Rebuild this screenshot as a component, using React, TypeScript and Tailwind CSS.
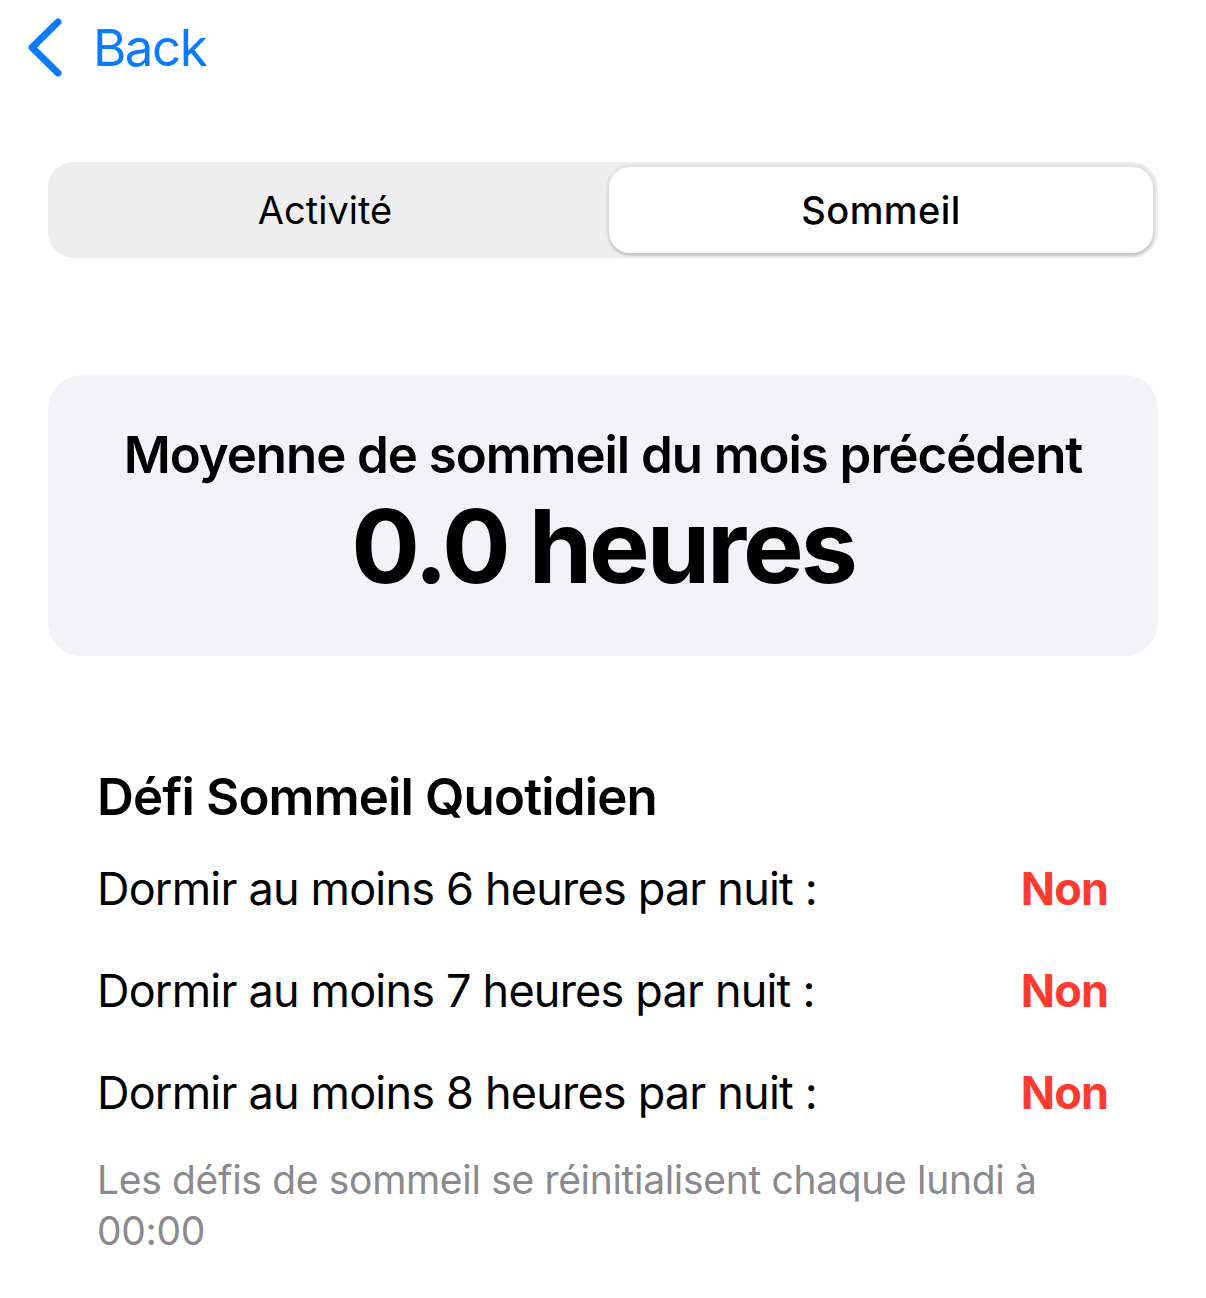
import React from "react";

export default function App() {
  const rows = ["6", "7", "8"];
  return (
    <div className="w-[1206px] min-h-[1298px] bg-white text-black font-['Inter','Liberation_Sans',sans-serif] antialiased">
      {/* Nav bar */}
      <div className="h-[95px] flex items-center pl-[24px]">
        <svg width="44" height="60" viewBox="0 0 44 60" className="shrink-0">
          <path
            d="M34 4 L8 29.5 L34 55"
            fill="none"
            stroke="#0a7aff"
            strokeWidth="7"
            strokeLinecap="round"
            strokeLinejoin="round"
          />
        </svg>
        <span className="ml-[25px] text-[51px] leading-[60px] text-[#0a7aff] tracking-[-1.5px]">Back</span>
      </div>

      {/* Segmented control */}
      <div className="mt-[67px] mx-[48px] h-[96px] rounded-[26px] bg-[#eeeeef] p-[5px] flex gap-[12px]">
        <div className="flex-1 flex items-center justify-center text-[38px] text-black tracking-[0px]">
          Activité
        </div>
        <div className="flex-1 flex items-center justify-center rounded-[21px] bg-white text-[38px] font-medium text-black shadow-[0_3px_3px_rgba(0,0,0,0.12),0_0_0_3px_rgba(0,0,0,0.04)] tracking-[0.4px]">
          Sommeil
        </div>
      </div>

      {/* Summary card */}
      <div className="mt-[117px] mx-[48px] h-[281px] rounded-[34px] bg-[#f2f2f7] flex flex-col items-center pt-[50px]">
        <div className="text-[51px] leading-[60px] font-semibold tracking-[-1.05px]">
          Moyenne de sommeil du mois précédent
        </div>
        <div className="mt-[9px] text-[102px] leading-[104px] font-bold tracking-[-3.1px]">
          0.0 heures
        </div>
      </div>

      {/* Challenges */}
      <div className="mt-[111px] pl-[97px] pr-[98px]">
        <div className="text-[51px] leading-[60px] font-semibold tracking-[-0.85px]">
          Défi Sommeil Quotidien
        </div>
        <div className="mt-[32px] flex flex-col gap-[42px]">
          {rows.map((h) => (
            <div key={h} className="h-[60px] flex items-center justify-between">
              <span className="text-[45px] leading-[60px] tracking-[-0.8px]">
                Dormir au moins {h} heures par nuit :
              </span>
              <span className="text-[45px] leading-[60px] font-bold text-[#ff3b30] tracking-[-0.9px]">
                Non
              </span>
            </div>
          ))}
        </div>
        <div className="mt-[31px] text-[39px] leading-[51px] text-[#8a8a8e] tracking-[-0.32px]">
          Les défis de sommeil se réinitialisent chaque lundi à 00:00
        </div>
      </div>
    </div>
  );
}
